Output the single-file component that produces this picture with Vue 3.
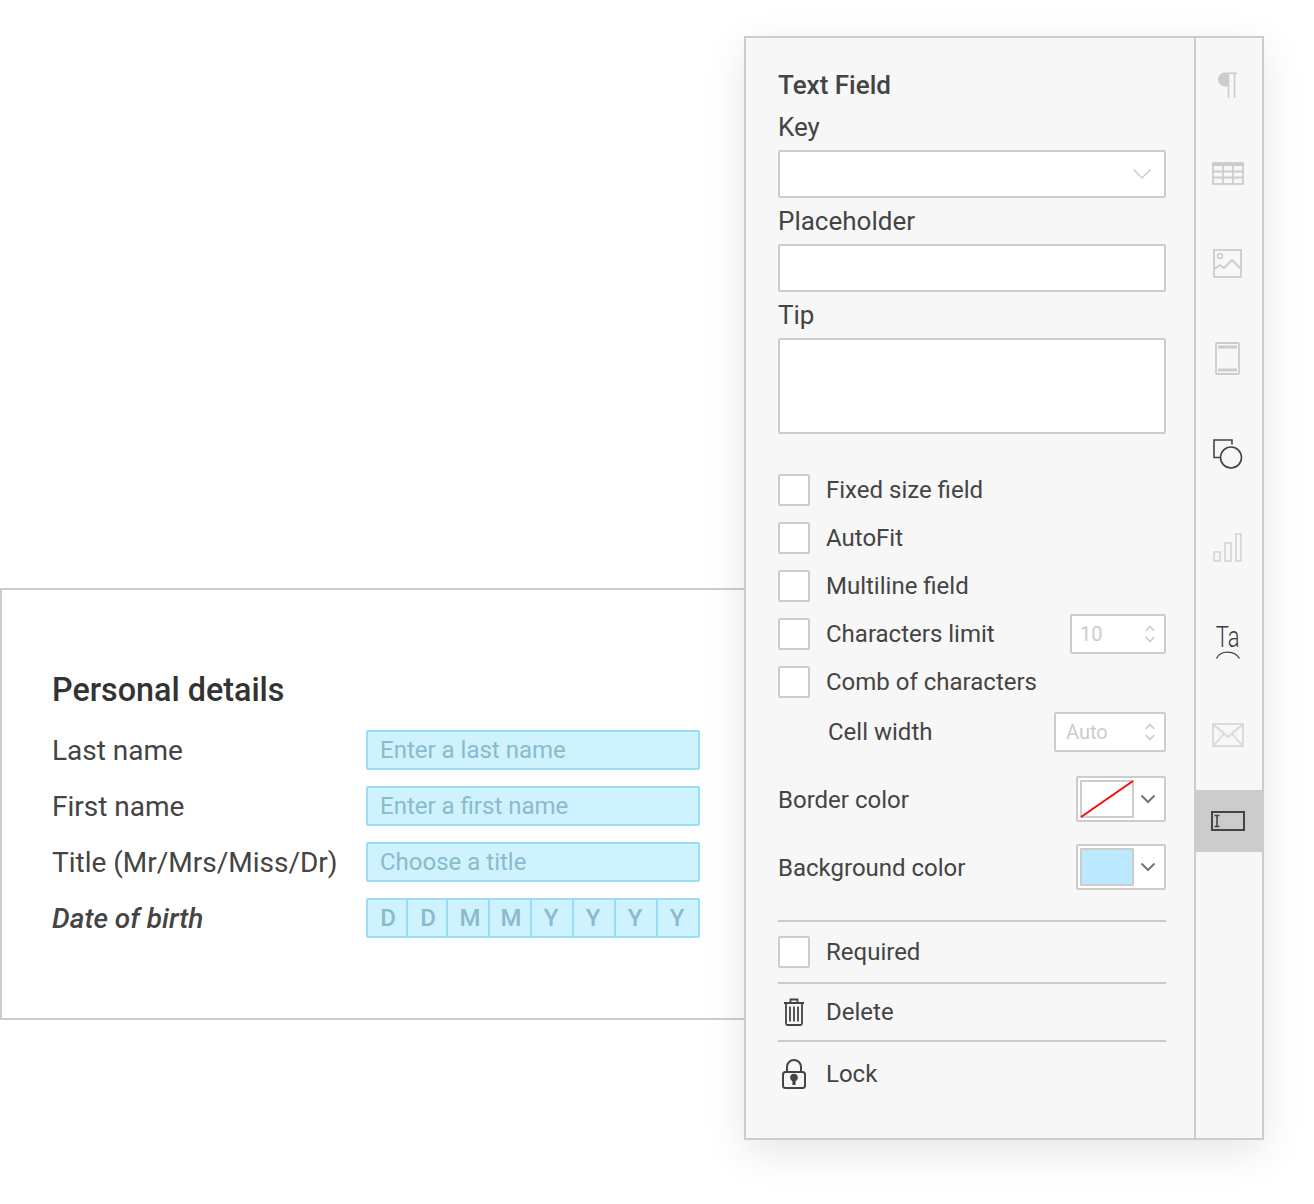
<template>
  <div class="page">
    <section class="form-card">
      <h2 class="form-title">Personal details</h2>
      <div v-for="row in formRows" :key="row.label" class="form-row">
        <span class="form-label">{{ row.label }}</span>
        <div class="form-input">{{ row.placeholder }}</div>
      </div>
      <div class="form-row">
        <span class="form-label label-date">Date of birth</span>
        <div class="comb">
          <span v-for="(c, i) in combCells" :key="i" class="comb-cell">{{ c }}</span>
        </div>
      </div>
    </section>

    <aside class="panel">
      <div class="props">
        <div class="props-title">Text Field</div>

        <label class="field-label first">Key</label>
        <div class="text-input select-input">
          <svg width="20" height="12" viewBox="0 0 20 12" fill="none" stroke="#ccc" stroke-width="1.5">
            <path d="M1.500 1.500L10 10l8.500-8.500" />
          </svg>
        </div>

        <label class="field-label">Placeholder</label>
        <div class="text-input"></div>

        <label class="field-label">Tip</label>
        <div class="text-input text-area"></div>

        <div class="checks">
          <div v-for="item in checkItems" :key="item.label" class="check-row">
            <span class="checkbox"></span>
            <span class="check-text">{{ item.label }}</span>
            <div v-if="item.value" class="stepper">
              <span>{{ item.value }}</span>
              <svg width="10" height="18" viewBox="0 0 10 18" fill="none" stroke="#ccc" stroke-width="1.6">
                <path d="M.8 6L5 1.500 9.200 6M.8 12L5 16.500 9.200 12" />
              </svg>
            </div>
          </div>
        </div>

        <div class="cell-row">
          <span class="cell-text">Cell width</span>
          <div class="stepper stepper-wide">
            <span>Auto</span>
            <svg width="10" height="18" viewBox="0 0 10 18" fill="none" stroke="#ccc" stroke-width="1.6">
              <path d="M.8 6L5 1.500 9.200 6M.8 12L5 16.500 9.200 12" />
            </svg>
          </div>
        </div>

        <div class="color-row border-color">
          <span class="color-label">Border color</span>
          <div class="color-pick">
            <span class="swatch">
              <svg width="50" height="34" viewBox="0 0 50 34" fill="none">
                <path d="M-1 35L51-1" stroke="#f00" stroke-width="1.800" />
              </svg>
            </span>
            <svg class="pick-arrow" width="16" height="10" viewBox="0 0 16 10" fill="none" stroke="#777" stroke-width="2">
              <path d="M1.500 1.500L8 8l6.500-6.500" />
            </svg>
          </div>
        </div>

        <div class="color-row bg-color">
          <span class="color-label">Background color</span>
          <div class="color-pick">
            <span class="swatch swatch-blue"></span>
            <svg class="pick-arrow" width="16" height="10" viewBox="0 0 16 10" fill="none" stroke="#777" stroke-width="2">
              <path d="M1.500 1.500L8 8l6.500-6.500" />
            </svg>
          </div>
        </div>

        <div class="action-required">
          <span class="checkbox"></span>
          <span class="check-text">Required</span>
        </div>

        <div class="action-row">
          <span class="action-icon">
            <svg width="22" height="28" viewBox="0 0 22 28" fill="none" stroke="#444" stroke-width="1.800">
              <path d="M1 5h20M7.500 4.500V1.500h7v3M3 5v20.500a1.500 1.500 0 0 0 1.500 1.500h13a1.500 1.500 0 0 0 1.500-1.500V5" />
              <path d="M7 8.500v15M11 8.500v15M15 8.500v15" />
            </svg>
          </span>
          <span>Delete</span>
        </div>

        <div class="action-row lock-row">
          <span class="action-icon">
            <svg width="24" height="30" viewBox="0 0 24 30" fill="none" stroke="#444" stroke-width="2">
              <path d="M5 13V8a7 7 0 0 1 14 0v5" />
              <rect x="1" y="13" width="22" height="16" rx="2.500" />
              <circle cx="12" cy="18.500" r="3.800" fill="#444" stroke="none" />
              <path d="M10.400 20h3.200v6h-3.200z" fill="#444" stroke="none" />
            </svg>
          </span>
          <span>Lock</span>
        </div>
      </div>

      <nav class="rail">
        <svg width="19" height="26" viewBox="0 0 19 26" fill="none" stroke="#ccc" stroke-width="1.600">
          <path d="M10.500 0.500H7a7 7 0 0 0 0 14h3.500z" fill="#ccc" stroke="none" />
          <path d="M10.500 1v25M16.500 1v25M10.500 1.200H19" />
        </svg>

        <svg width="32" height="23" viewBox="0 0 32 23" fill="none" stroke="#ccc" stroke-width="1.800">
          <rect x="1" y="1" width="30" height="21" />
          <path d="M1 2.500h30" stroke-width="3" />
          <path d="M1 9.500h30M1 15.500h30M11 3v19M21 3v19" />
        </svg>

        <svg width="29" height="29" viewBox="0 0 29 29" fill="none" stroke="#ccc" stroke-width="1.800">
          <rect x="1" y="1" width="27" height="27" />
          <circle cx="7" cy="7" r="2.500" stroke-width="1.400" />
          <path d="M1 20l6-4 4 3 8-8 9 9" />
        </svg>

        <svg width="25" height="33" viewBox="0 0 25 33" fill="none" stroke="#ccc" stroke-width="1.800">
          <rect x="1" y="1" width="23" height="31" rx="1" />
          <path d="M3 5h19M3 28h19" stroke-width="3" />
        </svg>

        <svg width="30" height="30" viewBox="0 0 30 30" fill="none" stroke="#444" stroke-width="1.600">
          <path d="M7 18.500H1V1h18v4.500" />
          <circle cx="18" cy="18.500" r="10.500" />
        </svg>

        <svg width="29" height="29" viewBox="0 0 29 29" fill="none" stroke="#d8d8d8" stroke-width="1.800">
          <rect x="1" y="19" width="6" height="9" />
          <rect x="12" y="10" width="6" height="18" />
          <rect x="23" y="1" width="5" height="27" />
        </svg>

        <div class="icon-ta">
          <span class="ta-text">Ta</span>
          <svg width="26" height="9" viewBox="0 0 26 9" fill="none">
            <path d="M1.500 8.500c4-8.500 18-8.500 23 0" stroke="#444" stroke-width="1.400" />
          </svg>
        </div>

        <svg width="32" height="24" viewBox="0 0 32 24" fill="none" stroke="#d8d8d8" stroke-width="1.800">
          <rect x="1" y="1" width="30" height="22" />
          <path d="M1 1l15 13L31 1M1 23l11-12M31 23L20 11" />
        </svg>

        <div class="rail-active">
          <svg width="34" height="20" viewBox="0 0 34 20" fill="none" stroke="#444">
            <rect x="1" y="1" width="32" height="18" stroke-width="2" />
            <path d="M3.500 4.500h5M3.500 15.500h5M6 4.500v11" stroke-width="1.600" />
          </svg>
        </div>
      </nav>
    </aside>
  </div>
</template>

<script setup>
const formRows = [
  { label: 'Last name', placeholder: 'Enter a last name' },
  { label: 'First name', placeholder: 'Enter a first name' },
  { label: 'Title (Mr/Mrs/Miss/Dr)', placeholder: 'Choose a title' }
]

const combCells = ['D', 'D', 'M', 'M', 'Y', 'Y', 'Y', 'Y']

const checkItems = [
  { label: 'Fixed size field' },
  { label: 'AutoFit' },
  { label: 'Multiline field' },
  { label: 'Characters limit', value: '10' },
  { label: 'Comb of characters' }
]
</script>

<style>
body {
  background: #fff;
}
</style>

<style scoped>
.page {
  position: relative;
  width: 1314px;
  height: 1204px;
  overflow: hidden;
  padding-top: 588px;
  box-sizing: border-box;
  background: #fff;
  font-family: Roboto, "Liberation Sans", sans-serif;
  color: #444;
}

/* form behind the panel */
.form-card {
  box-sizing: border-box;
  width: 760px;
  height: 432px;
  border: 2px solid #ccc;
  padding: 82px 0 0 50px;
  background: #fff;
}

.form-title {
  margin: 0 0 22px;
  font-size: 32.300px;
  line-height: 36px;
  font-weight: 500;
  color: #333;
}

.form-row {
  display: flex;
  align-items: center;
  height: 40px;
  margin-bottom: 16px;
}

.form-label {
  width: 314px;
  font-size: 28px;
  color: #444;
}

.label-date {
  font-style: italic;
  font-weight: 500;
}

.form-input {
  box-sizing: border-box;
  width: 334px;
  height: 40px;
  padding-left: 12px;
  border: 2px solid #99dcf5;
  border-radius: 2px;
  background: #cff2ff;
  color: #8bbacd;
  font-size: 24px;
  line-height: 36px;
}

.comb {
  box-sizing: border-box;
  display: grid;
  grid-template-columns: 40px 40px 42px 42px 42px 42px 42px 40px;
  width: 334px;
  height: 40px;
  border: 2px solid #99dcf5;
  border-radius: 2px;
  background: #cff2ff;
}

.comb-cell {
  box-sizing: border-box;
  border-right: 2px solid #99dcf5;
  text-align: center;
  color: #8bbacd;
  font-size: 24px;
  font-weight: 500;
  line-height: 36px;
}

.comb-cell:nth-child(-n + 2),
.comb-cell:nth-child(4) {
  padding-left: 2px;
}

.comb-cell:nth-child(3) {
  padding-left: 4px;
}

.comb-cell:nth-child(n + 5) {
  padding-right: 2px;
}

.comb-cell:last-child {
  border-right: 0;
}

/* floating panel */
.panel {
  position: absolute;
  left: 744px;
  top: 36px;
  box-sizing: border-box;
  display: flex;
  width: 520px;
  height: 1104px;
  border: 2px solid #ccc;
  background: #f7f7f7;
  box-shadow: 0 12px 40px rgba(0, 0, 0, 0.1);
}

.props {
  box-sizing: border-box;
  width: 450px;
  padding: 32px 28px 0 32px;
  border-right: 2px solid #ccc;
  font-size: 24px;
}

.props-title {
  font-size: 26px;
  line-height: 30px;
  font-weight: 500;
}

.field-label {
  display: block;
  margin: 8px 0;
  font-size: 26px;
  line-height: 30px;
}

.field-label.first {
  margin-top: 12px;
}

.text-input {
  box-sizing: border-box;
  height: 48px;
  border: 2px solid #ccc;
  border-radius: 2px;
  background: #fff;
}

.select-input {
  display: flex;
  align-items: center;
  justify-content: flex-end;
  padding-right: 12px;
}

.text-area {
  height: 96px;
}

.checks {
  display: flex;
  flex-direction: column;
  gap: 8px;
  margin-top: 36px;
}

.check-row {
  display: flex;
  align-items: center;
  height: 40px;
}

.checkbox {
  box-sizing: border-box;
  flex: none;
  width: 32px;
  height: 32px;
  border: 2px solid #ccc;
  border-radius: 2px;
  background: #fff;
}

.check-text {
  margin-left: 16px;
}

.stepper {
  box-sizing: border-box;
  display: flex;
  align-items: center;
  justify-content: space-between;
  width: 96px;
  height: 40px;
  margin-left: auto;
  padding: 0 9px 0 8px;
  border: 2px solid #ccc;
  border-radius: 2px;
  background: #fff;
  color: #ccc;
  font-size: 20px;
}

.stepper-wide {
  width: 112px;
  padding-left: 10px;
}

.cell-row {
  display: flex;
  align-items: center;
  height: 40px;
  margin-top: 10px;
  padding-left: 50px;
}

.color-row {
  display: flex;
  align-items: center;
  justify-content: space-between;
  height: 46px;
}

.color-label {
  padding-top: 2px;
}

.border-color {
  margin-top: 24px;
}

.bg-color {
  margin-top: 22px;
}

.color-pick {
  box-sizing: border-box;
  display: flex;
  align-items: center;
  width: 90px;
  height: 46px;
  padding-left: 2px;
  border: 2px solid #ccc;
  border-radius: 2px;
  background: #fff;
}

.swatch {
  box-sizing: border-box;
  display: block;
  width: 54px;
  height: 38px;
  border: 2px solid #ccc;
  border-radius: 1px;
  background: #fff;
}

.swatch svg {
  display: block;
  overflow: visible;
}

.swatch-blue {
  background: #bce9ff;
}

.pick-arrow {
  margin-left: 6px;
}

.action-required {
  display: flex;
  align-items: center;
  height: 32px;
  margin-top: 30px;
  padding: 14px 0;
  border-top: 2px solid #ccc;
  border-bottom: 2px solid #ccc;
}

.action-row {
  display: flex;
  align-items: center;
  height: 56px;
  border-bottom: 2px solid #ccc;
}

.lock-row {
  height: 64px;
  border-bottom: 0;
}

.action-icon {
  display: flex;
  justify-content: center;
  width: 32px;
  margin-right: 16px;
}

/* icon rail */
.rail {
  flex: 1;
  display: flex;
  flex-direction: column;
  align-items: center;
  gap: 64px;
  padding: 34px 3px 0 0;
}

.rail svg {
  flex: none;
}

.icon-ta {
  display: flex;
  flex-direction: column;
  align-items: center;
  width: 40px;
  height: 34px;
  margin-top: -1px;
}

.icon-ta svg {
  display: block;
}

.ta-text {
  display: block;
  height: 25px;
  transform: scaleX(0.76);
  font-size: 29px;
  font-weight: 300;
  line-height: 25px;
  color: #3a3a3a;
}

.rail-active {
  display: flex;
  align-items: center;
  justify-content: center;
  align-self: stretch;
  height: 62px;
  margin: -21px -3px 0 0;
  padding-right: 3px;
  background: #ccc;
}
</style>
